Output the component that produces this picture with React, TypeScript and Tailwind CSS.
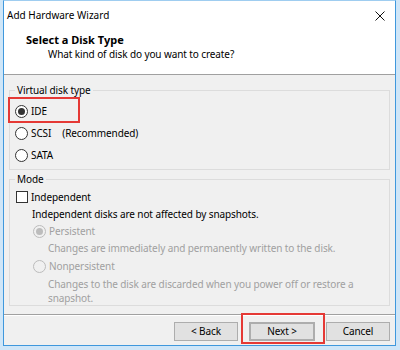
type RadioProps = {
  checked?: boolean
  disabled?: boolean
}

function Radio({ checked, disabled }: RadioProps) {
  return (
    <span
      className={`flex h-[13px] w-[13px] shrink-0 items-center justify-center rounded-full border ${
        disabled ? 'border-[#bcbcbc] bg-[#f0f0f0]' : 'border-[#333333] bg-white'
      }`}
    >
      {checked && (
        <span className={`h-[7px] w-[7px] rounded-full ${disabled ? 'bg-[#bcbcbc]' : 'bg-[#333333]'}`} />
      )}
    </span>
  )
}

const font = { fontFamily: '"Noto Sans", "Open Sans", sans-serif' }

const btn =
  'flex h-[19px] w-[64px] items-center justify-center border border-[#adadad] bg-[#e1e1e1] text-[10px] text-black'

export default function App() {
  return (
    <div className="h-[350px] w-[400px] bg-[#cfe6f8] pb-[4px] pl-[3px] pr-[4px]" style={font}>
      <div className="relative flex h-full flex-col border border-[#3f98dd] border-t-[#9fcdf0] bg-[#f0f0f0] text-[10px] tracking-[-0.1px] text-black">
        {/* title bar */}
        <div className="flex h-[29px] shrink-0 items-center justify-between bg-white pl-[3px] pr-[8px]">
          <span className="text-[10px] tracking-normal">Add Hardware Wizard</span>
          <svg width="10" height="10" viewBox="0 0 10 10" className="mr-[2px]">
            <path d="M0.5 0.5 L9.5 9.5 M9.5 0.5 L0.5 9.5" stroke="#111" strokeWidth="1" />
          </svg>
        </div>

        {/* header */}
        <div className="flex h-[44px] shrink-0 flex-col bg-white pt-[2px]">
          <div className="pl-[22px] text-[11px] font-bold leading-[15px] tracking-normal">Select a Disk Type</div>
          <div className="pl-[44px] leading-[14px]">What kind of disk do you want to create?</div>
        </div>
        <div className="h-px shrink-0 bg-[#a0a0a0]" />

        {/* body */}
        <div className="flex shrink-0 flex-col px-[5px] pt-[8px]">
          <fieldset className="m-0 border border-[#dcdcdc] p-0">
            <legend className="ml-[5px] px-[2px] leading-[14px]">Virtual disk type</legend>
            <div className="flex flex-col pb-[2px] pl-[5px] pt-[3px]">
              <div className="flex h-[22px] items-center gap-[3px]">
                <Radio checked />
                <span>IDE</span>
              </div>
              <div className="flex h-[22px] items-center gap-[3px]">
                <Radio />
                <span>SCSI</span>
                <span className="ml-[8px]">(Recommended)</span>
              </div>
              <div className="flex h-[23px] items-center gap-[3px]">
                <Radio />
                <span>SATA</span>
              </div>
            </div>
          </fieldset>

          <fieldset className="m-0 mt-[2px] border border-[#dcdcdc] p-0">
            <legend className="ml-[5px] px-[2px] leading-[14px]">Mode</legend>
            <div className="flex flex-col pl-[6px] pt-[3px]">
              <div className="flex h-[16px] items-center gap-[3px]">
                <span className="h-[12px] w-[12px] shrink-0 border border-[#333333] bg-white" />
                <span>Independent</span>
              </div>
              <div className="flex h-[18px] items-center pl-[16px]">
                Independent disks are not affected by snapshots.
              </div>
              <div className="flex h-[17px] items-center gap-[3px] pl-[17px] text-[#a0a0a0]">
                <Radio checked disabled />
                <span>Persistent</span>
              </div>
              <div className="flex h-[17px] items-center pl-[32px] text-[#a0a0a0]">
                Changes are immediately and permanently written to the disk.
              </div>
              <div className="flex h-[18px] items-center gap-[3px] pl-[17px] text-[#a0a0a0]">
                <Radio disabled />
                <span>Nonpersistent</span>
              </div>
              <div className="whitespace-nowrap pl-[32px] pt-[2px] leading-[14px] text-[#a0a0a0]">
                Changes to the disk are discarded when you power off or restore a
                <br />
                snapshot.
              </div>
            </div>
          </fieldset>
        </div>

        {/* footer */}
        <div className="mt-[8px] h-px shrink-0 bg-[#a0a0a0]" />
        <div className="h-px shrink-0 bg-white" />
        <div className="flex flex-1 items-start justify-end gap-[11px] pr-[5px] pt-[6px]">
          <div className={btn}>&lt; Back</div>
          <div className={`${btn} w-[66px] border-2 border-[#2f80d8]`}>Next &gt;</div>
          <div className={btn}>Cancel</div>
        </div>

        {/* red highlight annotations */}
        <div className="pointer-events-none absolute left-[4px] top-[96px] h-[26px] w-[72px] border-2 border-[#e53935]" />
        <div className="pointer-events-none absolute left-[237px] top-[312px] h-[31px] w-[84px] border-2 border-[#e53935]" />
      </div>
    </div>
  )
}
